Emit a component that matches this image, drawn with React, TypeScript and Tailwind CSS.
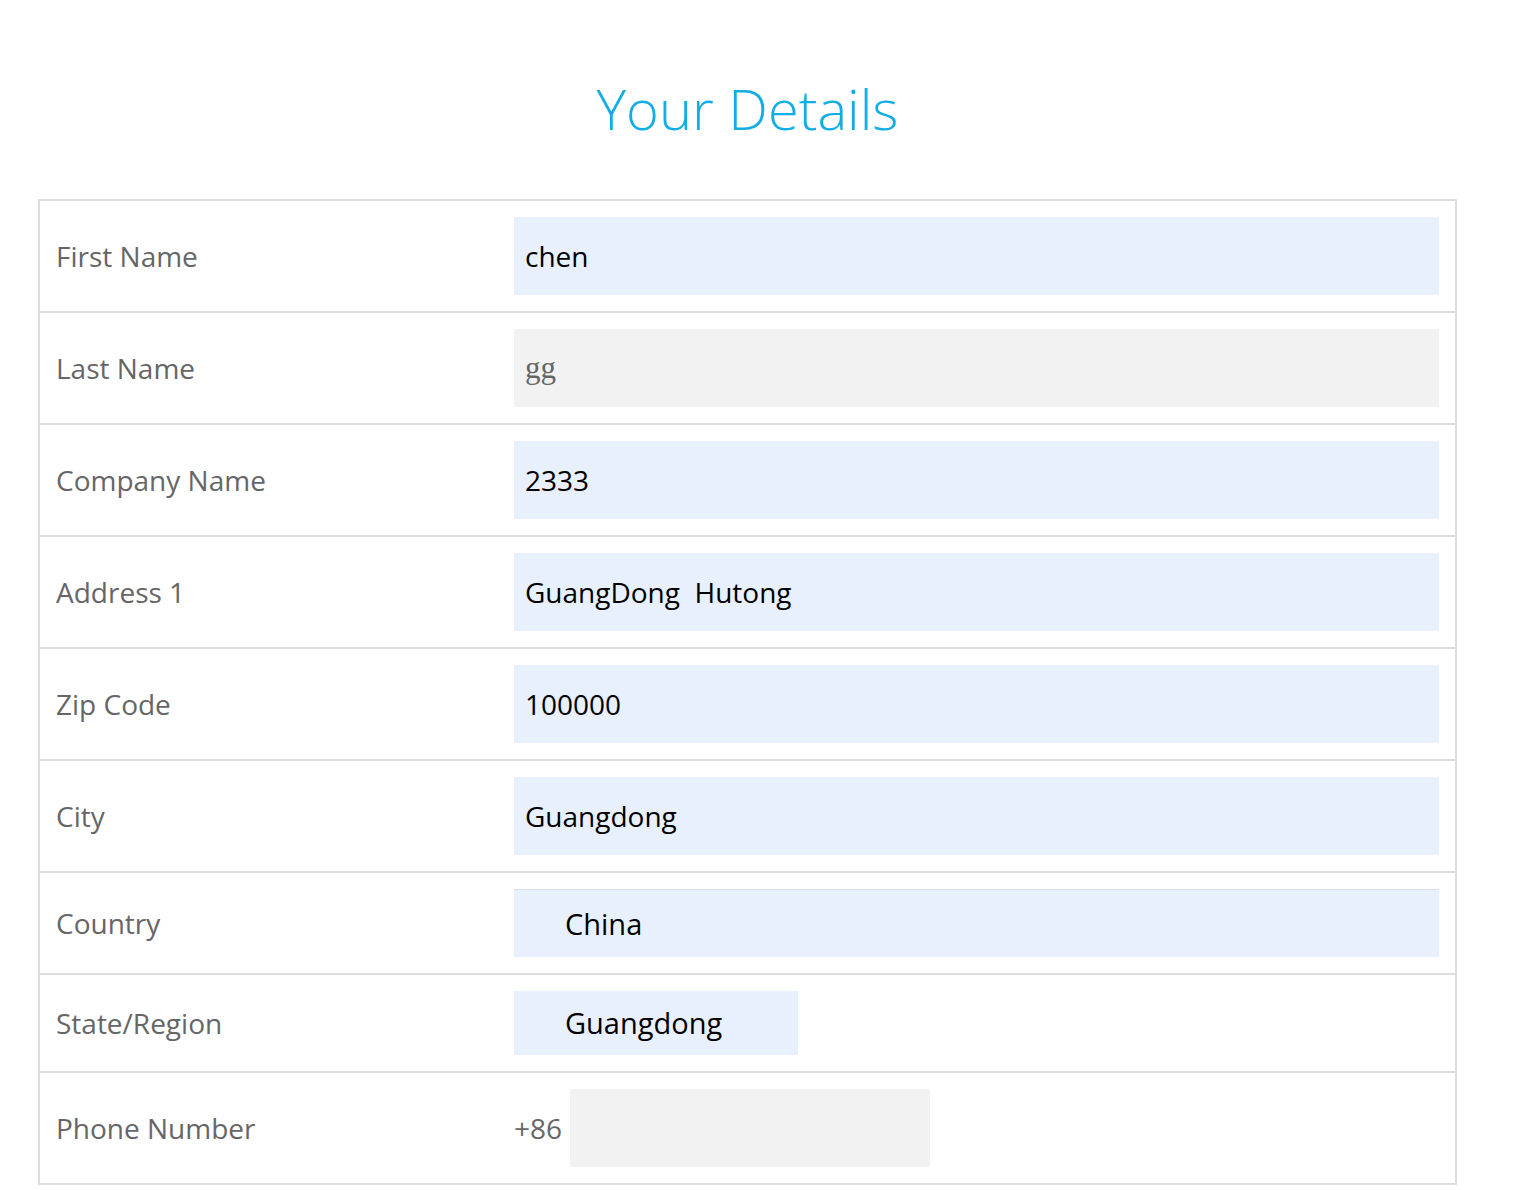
import React from "react";

const rows = [
  { label: "First Name", value: "chen" },
  { label: "Last Name", value: "gg", muted: true },
  { label: "Company Name", value: "2333" },
  { label: "Address 1", value: "GuangDong  Hutong" },
  { label: "Zip Code", value: "100000" },
  { label: "City", value: "Guangdong" },
];

const Label = ({ children }: { children: React.ReactNode }) => (
  <div className="w-[474px] shrink-0 pl-4 text-[28px] text-[#666] [font-family:'Open_Sans',sans-serif]">
    {children}
  </div>
);

export default function App() {
  return (
    <div className="min-h-[1190px] bg-white [font-family:'Open_Sans',sans-serif]">
      <div className="ml-[38px] w-[1419px] pt-[73px]">
        <h1 className="text-center text-[56px] font-light leading-[70px] text-[#10ade6]">
          Your Details
        </h1>

        <div className="mt-[56px] border-x-2 border-t-2 border-[#dddddd]">
          {rows.map((row) => (
            <div
              key={row.label}
              className="flex items-center border-b-2 border-[#dddddd] py-4"
            >
              <Label>{row.label}</Label>
              <div className="flex-1 pr-4">
                <div
                  className={`flex h-[78px] items-center px-[11px] whitespace-pre ${
                    row.muted
                      ? "bg-[#f2f2f2] text-[31px] text-[#666] [font-family:'Liberation_Serif',serif]"
                      : "bg-[#e8f0fe] text-[28px] text-black"
                  }`}
                >
                  {row.value}
                </div>
              </div>
            </div>
          ))}

          {/* Country */}
          <div className="flex h-[102px] items-center border-b-2 border-[#dddddd]">
            <Label>Country</Label>
            <div className="flex-1 pr-4">
              <div className="flex h-[68px] items-center border-t border-[#d6e0ef] bg-[#e8f0fe] pl-[51px] text-[29px] text-black">
                China
              </div>
            </div>
          </div>

          {/* State */}
          <div className="flex h-[98px] items-center border-b-2 border-[#dddddd]">
            <Label>State/Region</Label>
            <div className="flex-1">
              <div className="flex h-[64px] w-[284px] items-center bg-[#e8f0fe] pl-[51px] text-[29px] text-black">
                Guangdong
              </div>
            </div>
          </div>

          {/* Phone */}
          <div className="flex items-center border-b-2 border-[#dddddd] py-4">
            <Label>Phone Number</Label>
            <div className="flex flex-1 items-center gap-2">
              <span className="text-[28px] text-[#666]">+86</span>
              <div className="h-[78px] w-[360px] bg-[#f2f2f2]" />
            </div>
          </div>
        </div>
      </div>
    </div>
  );
}
